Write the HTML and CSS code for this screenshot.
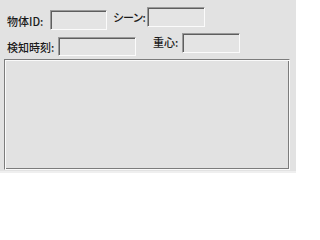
FILE: index.html
```html
<!DOCTYPE html>
<html lang="ja">
<head>
<meta charset="utf-8">
<link rel="stylesheet" href="styles.css">
</head>
<body>
<div class="panel">
  <div class="row row1">
    <span class="lbl lbl-id">物体ID:</span>
    <span class="box box-id"></span>
    <span class="lbl lbl-scene">シーン:</span>
    <span class="box box-scene"></span>
  </div>
  <div class="row row2">
    <span class="lbl lbl-time">検知時刻:</span>
    <span class="box box-time"></span>
    <span class="lbl lbl-center">重心:</span>
    <span class="box box-center"></span>
  </div>
  <div class="group"></div>
</div>
</body>
</html>
```
FILE: styles.css
```css
html, body {
  margin: 0;
  padding: 0;
  background: #ffffff;
}
.panel {
  width: 296px;
  background: #e2e2e2;
  height: 173px;
  padding-top: 7px;
  box-sizing: border-box;
  border-bottom: 2px solid #efefef;
  font-family: "Noto Sans CJK JP", "Noto Sans", sans-serif;
  font-size: 11px;
  font-weight: 500;
  color: #1a1a1a;
}
.row {
  display: flex;
  align-items: flex-start;
  height: 26px;
}
.lbl {
  display: block;
  line-height: 14px;
  white-space: nowrap;
}
.box {
  display: block;
  box-sizing: border-box;
  border: 1px solid;
  border-color: #9a9a9a #fbfbfb #fbfbfb #9a9a9a;
  box-shadow: inset 1px 1px 0 #5e5e5e;
  background: #e4e4e4;
}
.lbl-id { margin-left: 7px; width: 43px; margin-top: 7px; }
.box-id { width: 57px; height: 20px; margin-top: 3px; }
.lbl-scene { margin-left: 6px; width: 34px; margin-top: 3px; letter-spacing: -1px; }
.box-scene { width: 58px; height: 20px; }
.lbl-time { margin-left: 7px; width: 51px; margin-top: 7px; }
.box-time { width: 78px; height: 19px; margin-top: 4px; }
.lbl-center { margin-left: 17px; width: 29px; margin-top: 2px; }
.box-center { width: 58px; height: 20px; }
.group {
  margin-left: 4px;
  width: 286px;
  height: 111px;
  box-sizing: border-box;
  border: 1px solid;
  border-color: #7c7c7c #fafafa #fafafa #7c7c7c;
  box-shadow: inset 1px 1px 0 #fafafa, inset -1px -1px 0 #7c7c7c;
}
```
